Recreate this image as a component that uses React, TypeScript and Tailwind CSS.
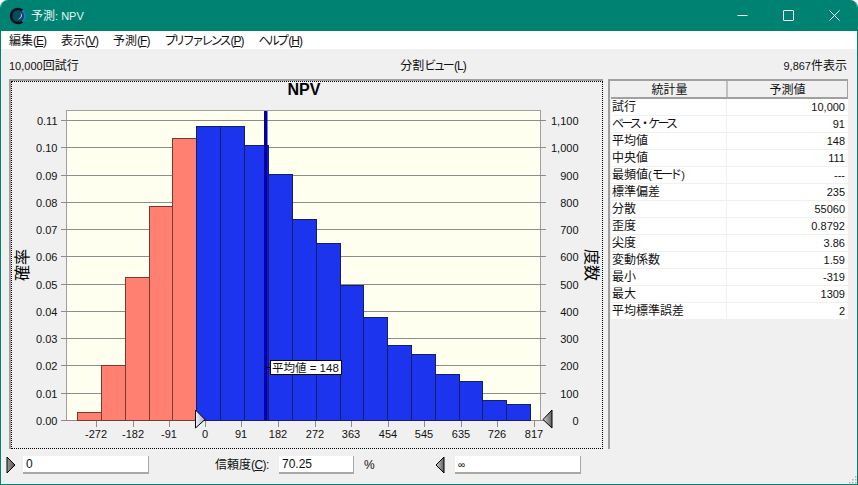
import React from "react";

const FONT = { fontFamily: '"Liberation Sans","Noto Sans CJK JP",sans-serif' };

const edges = [77, 101, 125, 149, 172, 196, 220, 244, 268, 292, 316, 340, 363, 387, 411, 435, 459, 482, 506, 530];
const tops = [412, 365, 277, 206, 138, 126, 126, 145, 174, 219, 243, 285, 317, 345, 354, 374, 381, 400, 404];

const leftTicks = ["0.11", "0.10", "0.09", "0.08", "0.07", "0.06", "0.05", "0.04", "0.03", "0.02", "0.01", "0.00"];
const rightTicks = ["1,100", "1,000", "900", "800", "700", "600", "500", "400", "300", "200", "100", "0"];
const xTicks: [string, number][] = [
  ["-272", 96], ["-182", 133], ["-91", 169], ["0", 205], ["91", 241], ["182", 278], ["272", 315],
  ["363", 351], ["454", 388], ["545", 424], ["635", 461], ["726", 497], ["817", 534],
];

const stats: [string, string][] = [
  ["試行", "10,000"],
  ["ベース・ケース", "91"],
  ["平均値", "148"],
  ["中央値", "111"],
  ["最頻値(モード)", "---"],
  ["標準偏差", "235"],
  ["分散", "55060"],
  ["歪度", "0.8792"],
  ["尖度", "3.86"],
  ["変動係数", "1.59"],
  ["最小", "-319"],
  ["最大", "1309"],
  ["平均標準誤差", "2"],
];

const menus: [string, string][] = [
  ["編集", "E"],
  ["表示", "V"],
  ["予測", "F"],
  ["プリファレンス", "P"],
  ["ヘルプ", "H"],
];

// the original font has narrow kana and small latin next to its kanji
function Mixed({ text }: { text: string }) {
  const parts = text.split(/([ァ-ヶー・]+|[0-9A-Za-z,.\-()=%: ]+)/).filter(Boolean);
  return (
    <>
      {parts.map((p, i) =>
        /^[ァ-ヶー・]/.test(p) ? (
          <span key={i} className="tracking-[-2.8px] pr-[2px]">{p}</span>
        ) : /^\(.\)$/.test(p) ? (
          <span key={i} className="tracking-[-1px]">{p}</span>
        ) : /^[0-9A-Za-z,.\-()=%: ]/.test(p) ? (
          <span key={i} className="text-[11px]">{p}</span>
        ) : (
          <span key={i}>{p}</span>
        )
      )}
    </>
  );
}

function Chart() {
  return (
    <svg viewBox="12 82 590 366" className="block w-[590px] h-[366px]" style={FONT}>
      <defs>
        <linearGradient id="handleLight" x1="0" x2="1" y1="0" y2="0">
          <stop offset="0" stopColor="#f2f2fa" />
          <stop offset="1" stopColor="#a8a8c4" />
        </linearGradient>
        <linearGradient id="handleDark" x1="0" x2="1" y1="0" y2="0">
          <stop offset="0" stopColor="#d0d0d0" />
          <stop offset="1" stopColor="#606060" />
        </linearGradient>
      </defs>
      <text x="304" y="95" textAnchor="middle" fontSize="16" fontWeight="700" fill="#000">NPV</text>
      <rect x="66.5" y="110.5" width="474" height="310" fill="#fffff0" stroke="#a0a0a0" />
      {leftTicks.map((t, i) => {
        const y = Math.round(120 + i * 27.27) + 0.5;
        return (
          <g key={t}>
            <line x1="61" x2="546" y1={y} y2={y} stroke="#8c8c8c" />
            <text x="57.5" y={y + 4} textAnchor="end" fontSize="11" fill="#111">{t}</text>
            <text x="578.5" y={y + 4} textAnchor="end" fontSize="11" fill="#111">{rightTicks[i]}</text>
          </g>
        );
      })}
      {tops.map((top, i) => (
        <rect
          key={i}
          x={edges[i] + 0.5}
          y={top + 0.5}
          width={edges[i + 1] - edges[i]}
          height={420 - top}
          fill={i < 5 ? "#ff8070" : "#1c34ee"}
          stroke={i < 5 ? "#7a3a34" : "#14206e"}
        />
      ))}
      <rect x="264" y="111" width="3.5" height="309" fill="#0000a0" />
      {xTicks.map(([t, x]) => (
        <g key={t}>
          <line x1={x + 0.5} x2={x + 0.5} y1="421" y2="427" stroke="#8c8c8c" />
          <text x={x} y="438" textAnchor="middle" fontSize="11" fill="#111">{t}</text>
        </g>
      ))}
      <text transform="translate(28 265) rotate(-90)" textAnchor="middle" fontSize="16" fill="#000">確率</text>
      <text transform="translate(586 265) rotate(90)" textAnchor="middle" fontSize="16" fill="#000">度数</text>
      <line x1="266" x2="271" y1="367.5" y2="367.5" stroke="#000" />
      <rect x="270.5" y="360.5" width="71" height="14" fill="#fff" stroke="#000" />
      <text x="272" y="371.5" fontSize="11.5" fill="#111">平均値 = 148</text>
      <polygon points="195.5,410 205,419.5 195.5,428" fill="url(#handleLight)" stroke="#000" />
      <polygon points="552,410 543,419.5 552,428" fill="url(#handleDark)" stroke="#000" />
    </svg>
  );
}

function Handle({ flip }: { flip?: boolean }) {
  return (
    <svg width="10" height="18" viewBox="0 0 10 18" className="shrink-0">
      <defs>
        <linearGradient id={flip ? "hb" : "ha"} x1="0" x2="1" y1="0" y2="0">
          <stop offset="0" stopColor={flip ? "#d0d0d0" : "#9a9a9a"} />
          <stop offset="1" stopColor={flip ? "#606060" : "#505050"} />
        </linearGradient>
      </defs>
      <polygon
        points={flip ? "9,1 1,9 9,17" : "1,1 9,9 1,17"}
        fill={`url(#${flip ? "hb" : "ha"})`}
        stroke="#000"
      />
    </svg>
  );
}

function Field({ value, className }: { value: string; className: string }) {
  return (
    <div className={`h-[18px] bg-white border-b-2 border-r border-[#a8a8a8] pl-[3px] leading-[17px] text-[#111] ${className}`}>
      {value}
    </div>
  );
}

export default function App() {
  return (
    <div className="w-[858px] h-[485px] bg-white overflow-hidden" style={FONT}>
      <div className="w-full h-full flex flex-col bg-[#f0f0f0] rounded-t-[8px] border-x border-b border-[#008272] overflow-hidden text-[12px] text-[#111]">
        <div className="h-[31px] shrink-0 bg-[#008272] flex items-center text-white pl-[8px]">
          <svg width="18" height="18" viewBox="0 0 18 18" className="shrink-0">
            <circle cx="9" cy="9" r="7" fill="#0c4a5e" />
            <path d="M13.5 3.6A7 7 0 1 0 13.5 14.4" fill="none" stroke="#08121c" strokeWidth="2.6" />
            <path d="M13.5 3.6A7 7 0 0 1 13.5 14.4" fill="none" stroke="#1f78c8" strokeWidth="2" />
            <path d="M11.5 5.5a4 4 0 0 1-3 7 5 5 0 0 0 3-7z" fill="#a8d4e8" />
          </svg>
          <span className="ml-[4px] text-[#e8f4f2]">
            <Mixed text="予測: NPV" />
          </span>
          <div className="ml-auto flex items-center">
            <div className="w-[46px] flex justify-center">
              <svg width="11" height="11" viewBox="0 0 11 11"><path d="M0.5 5.5h10" stroke="#fff" fill="none" /></svg>
            </div>
            <div className="w-[46px] flex justify-center">
              <svg width="11" height="11" viewBox="0 0 11 11"><rect x="0.5" y="0.5" width="10" height="10" rx="0.5" stroke="#fff" fill="none" /></svg>
            </div>
            <div className="w-[46px] flex justify-center">
              <svg width="11" height="11" viewBox="0 0 11 11"><path d="M0.5 0.5l10 10M10.5 0.5l-10 10" stroke="#fff" fill="none" /></svg>
            </div>
          </div>
        </div>

        <div className="h-[18px] shrink-0 bg-white flex items-center pl-[8px] gap-[15px] leading-[18px] pt-[1px]">
          {menus.map(([label, k]) => (
            <span key={k} className="whitespace-nowrap">
              <Mixed text={label} />
              <span className="tracking-[-1px]">(<span className="underline">{k}</span>)</span>
            </span>
          ))}
        </div>

        <div className="h-[30px] shrink-0 grid grid-cols-3 items-center pl-[8px] pr-[10px] pt-[3px]">
          <span><Mixed text="10,000回試行" /></span>
          <span className="text-center pl-[10px]"><Mixed text="分割ビュー(L)" /></span>
          <span className="text-right"><Mixed text="9,867件表示" /></span>
        </div>

        <div className="h-[370px] shrink-0 flex pl-[8px]">
          <div className="w-[594px] border-t-2 border-l-2 border-[#a0a0a0]">
            <div className="h-full border border-dotted border-black">
              <Chart />
            </div>
          </div>
          <div className="w-[240px] ml-[5px] flex flex-col border-t-2 border-l-2 border-[#a0a0a0]">
            <div className="h-[18px] shrink-0 flex bg-[#f0f0f0] border-b-2 border-r border-[#a0a0a0] leading-[18px] ml-[1px]">
              <div className="w-[117px] text-center pl-[2px] border-r-2 border-[#c0c0c0]">統計量</div>
              <div className="flex-1 text-center">予測値</div>
            </div>
            {stats.map(([name, val]) => (
              <div key={name} className="h-[17px] shrink-0 flex bg-white border-b border-[#f0f0f0] leading-[17px] ml-[1px] w-[237px]">
                <div className="w-[116px] pl-[1px] border-r border-[#f0f0f0] whitespace-nowrap"><Mixed text={name} /></div>
                <div className="flex-1 text-right pr-[3px] text-[11px]">{val}</div>
              </div>
            ))}
          </div>
        </div>

        <div className="flex-1 relative flex items-start pt-[7px] pl-[5px]">
          <Handle />
          <Field value="0" className="w-[126px] ml-[7px]" />
          <span className="ml-[66px] leading-[18px] whitespace-nowrap w-[64px]">
            信頼度<span className="tracking-[-0.6px]">(<span className="underline">C</span>):</span>
          </span>
          <Field value="70.25" className="w-[75px]" />
          <span className="ml-[10px] leading-[18px] w-[71px]">%</span>
          <Handle flip />
          <Field value="∞" className="w-[126px] ml-[10px] text-[10px]" />
          <svg width="9" height="9" viewBox="0 0 9 9" className="absolute right-0 bottom-0">
            <g fill="#b0b0b0">
              <rect x="7" y="1" width="1.5" height="1.5" />
              <rect x="4" y="4" width="1.5" height="1.5" />
              <rect x="7" y="4" width="1.5" height="1.5" />
              <rect x="1" y="7" width="1.5" height="1.5" />
              <rect x="4" y="7" width="1.5" height="1.5" />
              <rect x="7" y="7" width="1.5" height="1.5" />
            </g>
          </svg>
        </div>
      </div>
    </div>
  );
}
